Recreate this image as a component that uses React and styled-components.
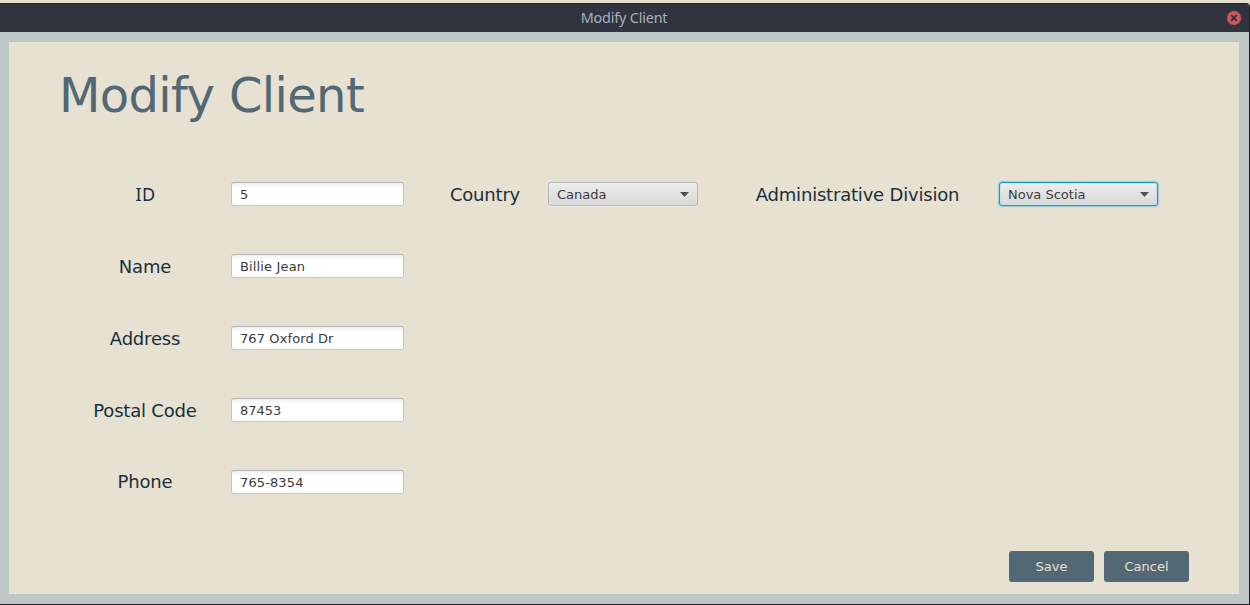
import React from "react";
import styled, { createGlobalStyle } from "styled-components";

const GlobalStyle = createGlobalStyle`
  * { box-sizing: border-box; }
  body { margin: 0; background: #e6dfcd; overflow: hidden; }
`;

const Desktop = styled.div`
  width: 1250px;
  height: 605px;
  padding-top: 3px;
  background: #e6dfcd;
  font-family: Verdana, "DejaVu Sans", sans-serif;
`;

const Window = styled.div`
  height: 602px;
  display: flex;
  flex-direction: column;
  border-right: 1px solid #1b1e25;
  border-bottom: 1px solid #1b1e25;
  border-radius: 1px 4px 0 0;
  overflow: hidden;
  background: #bfc7c6;
`;

const TitleBar = styled.header`
  height: 29px;
  flex: none;
  display: grid;
  grid-template-columns: 1fr auto 1fr;
  align-items: center;
  padding: 0 8px 1px 7px;
  background: #30343f;
  border-top: 1px solid #20242d;
`;

const Caption = styled.span`
  grid-column: 2;
  font-family: "Noto Sans", sans-serif;
  font-size: 14.4px;
  line-height: 19px;
  letter-spacing: -0.18px;
  color: #a9b0be;
`;

const CloseButton = styled.button`
  justify-self: end;
  display: flex;
  width: 14px;
  height: 14px;
  padding: 0;
  border: 0;
  background: none;
`;

const Pane = styled.main`
  flex: 1;
  margin: 10px 10px 10px 9px;
  padding: 24px 50px 12px 50px;
  display: flex;
  flex-direction: column;
  background: #e7e1d1;
`;

const Heading = styled.h1`
  margin: 0;
  height: 58px;
  font-size: 48px;
  line-height: 58px;
  font-weight: 400;
  letter-spacing: -0.63px;
  color: #526875;
  white-space: nowrap;
`;

const Form = styled.div`
  display: grid;
  grid-template-columns: 172px 173px 144px 150px 301px 159px;
  grid-auto-rows: 24px;
  row-gap: 48px;
  margin-top: 58px;
`;

const Label = styled.label`
  grid-column: ${(p) => p.$column || 1};
  justify-self: center;
  font-family: ${(p) => (p.$serifCaps ? '"Noto Sans", sans-serif' : "inherit")};
  font-size: 18px;
  line-height: ${(p) => (p.$raised ? 24 : 26)}px;
  letter-spacing: ${(p) => (p.$serifCaps ? "0.4px" : "-0.2px")};
  margin-left: ${(p) => p.$indent || 0}px;
  white-space: nowrap;
  color: #192f3c;
`;

const Input = styled.input`
  width: 173px;
  height: 24px;
  padding: 0 8px;
  border: 1px solid #c6c6c6;
  border-top-color: #b5b5b5;
  border-radius: 3px;
  background: linear-gradient(#f1f1f1, #fff 5px);
  font: 13px Verdana, "DejaVu Sans", sans-serif;
  letter-spacing: ${(p) => p.$spacing || 0}px;
  color: #3b3b3b;
  outline: 0;
`;

const Combo = styled.div`
  height: 24px;
  display: flex;
  align-items: center;
  justify-content: space-between;
  padding: 0 8px;
  border: 1px solid ${(p) => (p.$focused ? "#149bc8" : "#b5b5b5")};
  border-radius: 3px;
  background: linear-gradient(#ececec, #d9d9d9);
  box-shadow: ${(p) =>
    p.$focused
      ? "0 0 1px 1px #039ed355, inset 0 0 0 1px #cbe3e5"
      : "inset 0 1px 0 #f3f3f3, 0 1px 0 #f1ede3"};
  font-size: 13px;
  color: #3b3b3b;
`;

const Actions = styled.div`
  margin-top: auto;
  display: flex;
  justify-content: flex-end;
  gap: 10px;
`;

const ActionButton = styled.button`
  width: 85px;
  height: 31px;
  padding: 0;
  border: 0;
  border-radius: 3px;
  background: #526875;
  color: #e7e1d1;
  font: 13px/31px Verdana, "DejaVu Sans", sans-serif;
`;

const Arrow = () => (
  <svg width="9" height="5" viewBox="0 0 9 5">
    <path d="M0 0H9L4.5 5Z" fill="#505050" />
  </svg>
);

const fields = [
  { label: "Name", value: "Billie Jean", spacing: 0.15 },
  { label: "Address", value: "767 Oxford Dr", spacing: 0.1 },
  { label: "Postal Code", value: "87453", spacing: 0 },
  { label: "Phone", value: "765-8354", spacing: 0.12, raised: true },
];

export default function App() {
  return (
    <Desktop>
      <GlobalStyle />
      <Window>
        <TitleBar>
          <Caption>Modify Client</Caption>
          <CloseButton aria-label="Close">
            <svg width="14" height="14" viewBox="0 0 14 14">
              <circle cx="7" cy="7" r="7" fill="#cc575d" />
              <path d="M4.2 4.2L9.8 9.8M9.8 4.2L4.2 9.8" stroke="#30343f" strokeWidth="1.9" />
            </svg>
          </CloseButton>
        </TitleBar>
        <Pane>
          <Heading>Modify Client</Heading>
          <Form>
            <Label $serifCaps $raised $indent={1}>ID</Label>
            <Input defaultValue="5" />
            <Label $column={3} $indent={18}>Country</Label>
            <Combo>Canada<Arrow /></Combo>
            <Label $column={5} $indent={18}>Administrative Division</Label>
            <Combo $focused>Nova Scotia<Arrow /></Combo>
            {fields.map((f) => (
              <React.Fragment key={f.label}>
                <Label $raised={f.raised}>{f.label}</Label>
                <Input defaultValue={f.value} $spacing={f.spacing} />
              </React.Fragment>
            ))}
          </Form>
          <Actions>
            <ActionButton>Save</ActionButton>
            <ActionButton>Cancel</ActionButton>
          </Actions>
        </Pane>
      </Window>
    </Desktop>
  );
}
